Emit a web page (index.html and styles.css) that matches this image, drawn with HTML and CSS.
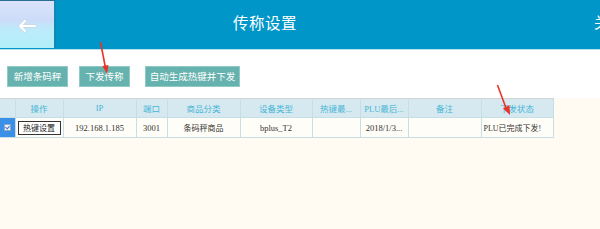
FILE: index.html
```html
<!DOCTYPE html>
<html lang="zh-CN">
<head>
<meta charset="utf-8">
<title>传称设置</title>
<link rel="stylesheet" href="styles.css">
</head>
<body>
<div class="header">
  <div class="back">
    <svg class="back-icon" width="20" height="14" viewBox="0 0 20 14">
      <path d="M18 7 H3 M8 2 L3 7 L8 12" fill="none" stroke="#c9d6e6" stroke-width="3.4" stroke-linecap="round" stroke-linejoin="round"/>
      <path d="M18 7 H3 M8 2 L3 7 L8 12" fill="none" stroke="#ffffff" stroke-width="2.2" stroke-linecap="round" stroke-linejoin="round"/>
    </svg>
  </div>
  <div class="title">传称设置</div>
  <div class="corner">关</div>
</div>
<div class="toolbar">
  <button class="btn btn-add">新增条码秤</button>
  <button class="btn btn-send">下发传称</button>
  <button class="btn btn-auto">自动生成热键并下发</button>
</div>
<div class="content">
  <table class="grid">
    <colgroup>
      <col class="c-chk"><col class="c-op"><col class="c-ip"><col class="c-port"><col class="c-cat">
      <col class="c-type"><col class="c-hot"><col class="c-plu"><col class="c-note"><col class="c-state">
    </colgroup>
    <thead>
      <tr>
        <th></th><th>操作</th><th>IP</th><th>端口</th><th>商品分类</th>
        <th>设备类型</th><th>热键最...</th><th>PLU最后...</th><th>备注</th><th>下发状态</th>
      </tr>
    </thead>
    <tbody>
      <tr>
        <td class="chk-cell"><span class="chk"></span></td>
        <td><span class="hotkey">热键设置</span></td>
        <td>192.168.1.185</td>
        <td>3001</td>
        <td class="cjk">条码秤商品</td>
        <td>bplus_T2</td>
        <td></td>
        <td class="clip">2018/1/3...</td>
        <td></td>
        <td class="left">PLU已完成下发!</td>
      </tr>
    </tbody>
  </table>
</div>
<svg class="arrows" width="600" height="229" viewBox="0 0 600 229">
  <line x1="100.5" y1="42" x2="105.5" y2="68" stroke="#e8332a" stroke-width="1.6"/>
  <polygon points="102.5,66 108.5,65 107,74" fill="#e8332a"/>
  <line x1="497.5" y1="85" x2="506" y2="108" stroke="#e8332a" stroke-width="1.6"/>
  <polygon points="503,108.5 509.5,105 510,115" fill="#e8332a"/>
</svg>
</body>
</html>
```
FILE: styles.css
```css
* { box-sizing: border-box; }
html, body {
  margin: 0;
  padding: 0;
  width: 600px;
  height: 229px;
  overflow: hidden;
  background: #fffbf3;
  font-family: "Liberation Serif", "Noto Sans CJK SC", serif;
}
.header {
  height: 50px;
  background: #0096c8;
  border-bottom: 1px solid #b9e2ef;
  display: flex;
  align-items: flex-start;
  overflow: hidden;
  position: relative;
}
.back {
  width: 56px;
  height: 48px;
  background: linear-gradient(#dbe3fb 0%, #ccdcf8 42%, #bdeafa 58%, #b0f0f9 100%);
  border-right: 2px solid #1289b4;
  border-top: 1px solid #2b6f98;
  display: flex;
  align-items: center;
  justify-content: center;
  padding-top: 2px;
}
.title {
  margin-left: 177px;
  margin-top: 12px;
  color: #ffffff;
  font-family: "Noto Sans CJK SC", sans-serif;
  font-size: 15.5px;
  letter-spacing: 0.5px;
  line-height: 20px;
}
.corner {
  margin-left: auto;
  margin-right: -9px;
  margin-top: 12px;
  color: #ffffff;
  font-family: "Noto Sans CJK SC", sans-serif;
  font-size: 15px;
  line-height: 20px;
}
.toolbar {
  height: 48px;
  background: #ffffff;
  padding: 16px 0 0 7px;
  display: flex;
  align-items: flex-start;
}
.btn {
  height: 21px;
  border: 1px solid #8fcac6;
  background: #66b2ae;
  color: #ffffff;
  font-family: "Noto Sans CJK SC", sans-serif;
  font-size: 9.5px;
  line-height: 19px;
  padding: 0;
  margin: 0;
  text-align: center;
}
.btn-add { width: 61px; }
.btn-send { width: 51px; margin-left: 11px; }
.btn-auto { width: 95px; margin-left: 15px; }
.content {
  background: #fffbf3;
}
.grid {
  border-collapse: collapse;
  table-layout: fixed;
  width: 553px;
  border-top: 1px solid #d3d3d3;
}
.c-chk { width: 15px; }
.c-op { width: 48px; }
.c-ip { width: 73px; }
.c-port { width: 31px; }
.c-cat { width: 73px; }
.c-type { width: 72px; }
.c-hot { width: 48px; }
.c-plu { width: 48px; }
.c-note { width: 73px; }
.c-state { width: 72px; }
.grid th {
  height: 19px;
  background: #d6e9f0;
  color: #46b6d6;
  font-weight: normal;
  font-size: 8.5px;
  border-left: 1px solid #c6dfe7;
  border-bottom: 1px solid #c6dfe7;
  padding: 0 1px;
  white-space: nowrap;
  overflow: hidden;
  text-align: center;
}
.grid th:first-child { border-left: none; }
.grid th:last-child { border-right: 1px solid #c6dfe7; }
.grid td {
  height: 20px;
  background: #fffdf7;
  color: #333333;
  font-size: 8.5px;
  border-left: 1px solid #c6dfe7;
  border-bottom: 1px solid #c6dfe7;
  text-align: center;
  padding: 0 1px;
  white-space: nowrap;
  overflow: hidden;
}
.grid td:last-child { border-right: 1px solid #c6dfe7; }
.grid td.cjk { font-size: 8px; }
.grid td.chk-cell {
  background: #3a8fe6;
  border-left: none;
  padding: 0;
}
.grid td.left { text-align: left; padding-left: 2px; font-size: 8px; }
.grid td.clip { text-overflow: clip; }
.chk {
  display: block;
  width: 7px;
  height: 7px;
  margin: 0 auto;
  background: #eef3fb;
  border: 1px solid #8ea6c6;
  position: relative;
}
.chk::after {
  content: "";
  position: absolute;
  left: 1px;
  top: 0;
  width: 2px;
  height: 3px;
  border-right: 1px solid #4a70c0;
  border-bottom: 1px solid #4a70c0;
  transform: rotate(40deg);
}
.hotkey {
  display: inline-block;
  width: 43px;
  height: 14px;
  border: 1px solid #333333;
  background: #ffffff;
  color: #222222;
  font-family: "Noto Sans CJK SC", sans-serif;
  font-size: 8px;
  line-height: 12px;
  text-align: center;
}
.arrows {
  position: absolute;
  left: 0;
  top: 0;
  pointer-events: none;
}
```
